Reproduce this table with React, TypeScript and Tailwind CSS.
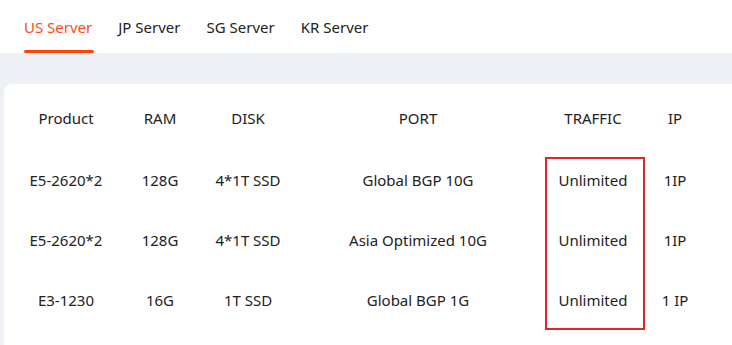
import React from "react";

const cols = "grid grid-cols-[124px_64px_112px_228px_122px_42px]";

const rows = [
  ["E5-2620*2", "128G", "4*1T SSD", "Global BGP 10G", "Unlimited", "1IP"],
  ["E5-2620*2", "128G", "4*1T SSD", "Asia Optimized 10G", "Unlimited", "1IP"],
  ["E3-1230", "16G", "1T SSD", "Global BGP 1G", "Unlimited", "1 IP"],
];

const tabs = ["US Server", "JP Server", "SG Server", "KR Server"];

export default function App() {
  return (
    <div
      className="w-[732px] h-[345px] overflow-hidden bg-[#edf0f5] text-[#222] text-[15px]"
      style={{ fontFamily: '"Noto Sans", "Open Sans", sans-serif' }}
    >
      <div className="h-[53px] bg-white flex items-stretch gap-[26px] pl-[24px]">
        {tabs.map((t, i) => (
          <div key={t} className="relative flex items-center pt-[2px]">
            <span className={i === 0 ? "text-[#ff4d12]" : "text-[#222]"}>{t}</span>
            {i === 0 && (
              <div className="absolute left-0 right-[-2px] bottom-0 h-[3px] rounded-full bg-[#ff4500]" />
            )}
          </div>
        ))}
      </div>
      <div className="ml-[4px] mt-[31px] bg-white rounded-tl-[8px] h-[300px] relative pt-[22px]">
        <div className={`${cols} h-[24px] items-center text-center`}>
          <div>Product</div>
          <div>RAM</div>
          <div>DISK</div>
          <div>PORT</div>
          <div>TRAFFIC</div>
          <div>IP</div>
        </div>
        <div className="mt-[20px]">
          {rows.map((r, i) => (
            <div key={i} className={`${cols} h-[60px] items-center text-center`}>
              {r.map((c, j) => (
                <div key={j}>{c}</div>
              ))}
            </div>
          ))}
        </div>
        <div className="absolute left-[541px] top-[73px] w-[100px] h-[173px] border-2 border-[#e5232b]" />
      </div>
    </div>
  );
}
